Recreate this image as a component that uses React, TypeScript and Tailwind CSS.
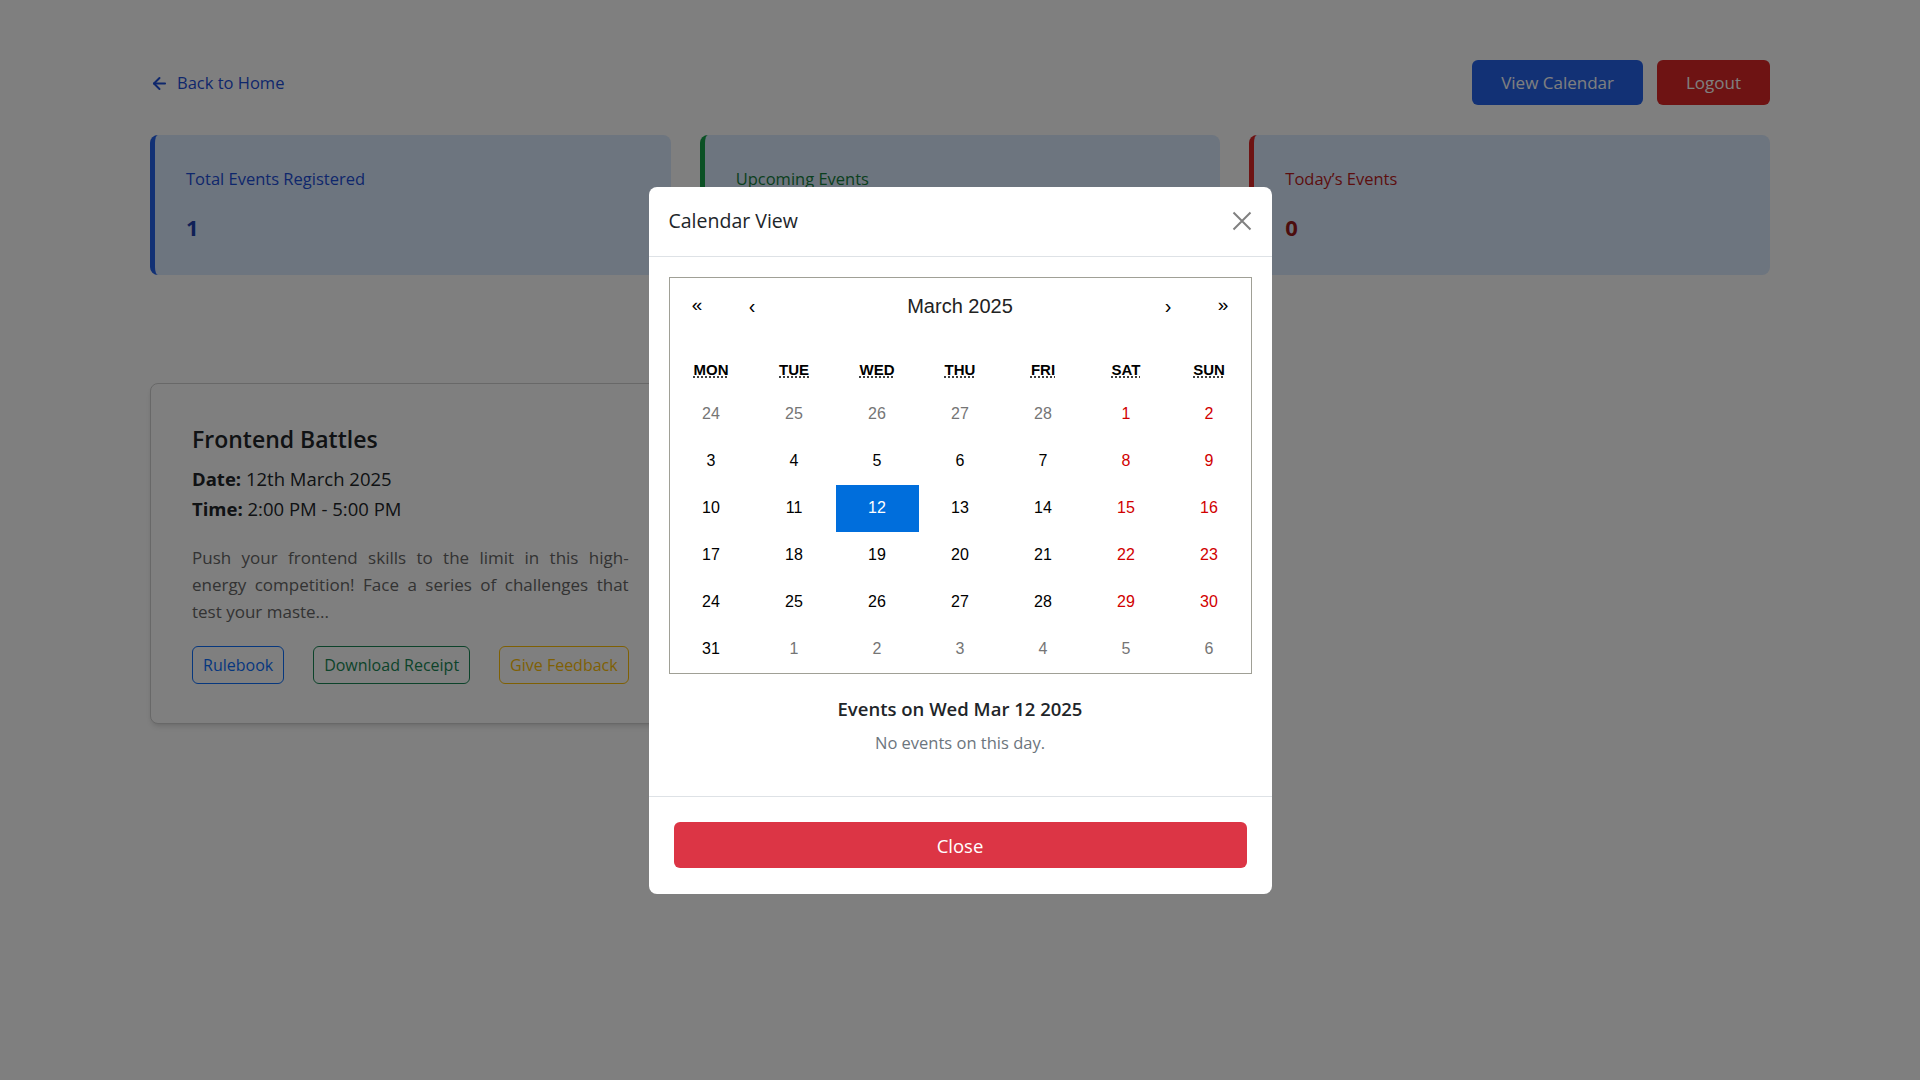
import React from "react";
import { ArrowLeft } from "lucide-react";

type Tile = { d: number; n: boolean };

const weeks: Tile[][] = [
  [24, 25, 26, 27, 28].map((d) => ({ d, n: true })).concat([1, 2].map((d) => ({ d, n: false }))),
  [3, 4, 5, 6, 7, 8, 9].map((d) => ({ d, n: false })),
  [10, 11, 12, 13, 14, 15, 16].map((d) => ({ d, n: false })),
  [17, 18, 19, 20, 21, 22, 23].map((d) => ({ d, n: false })),
  [24, 25, 26, 27, 28, 29, 30].map((d) => ({ d, n: false })),
  [{ d: 31, n: false }].concat([1, 2, 3, 4, 5, 6].map((d) => ({ d, n: true }))),
];

const weekdays = [
  ["MON", "Monday"],
  ["TUE", "Tuesday"],
  ["WED", "Wednesday"],
  ["THU", "Thursday"],
  ["FRI", "Friday"],
  ["SAT", "Saturday"],
  ["SUN", "Sunday"],
];

function StatCard({
  title,
  value,
  border,
  titleColor,
  valueColor,
}: {
  title: string;
  value: string;
  border: string;
  titleColor: string;
  valueColor: string;
}) {
  return (
    <div className={`h-[140px] rounded-lg border-l-[5px] bg-[#dbeafe] pl-[31px] pt-[32px] ${border}`}>
      <p className={`text-[16.5px] leading-[24px] ${titleColor}`}>{title}</p>
      <p className={`mt-[20px] text-[22px] font-bold leading-[33px] ${valueColor}`}>{value}</p>
    </div>
  );
}

function Calendar() {
  return (
    <div className="w-full border border-[#a0a096] bg-white font-['Liberation_Sans',Arial,sans-serif]">
      <div className="mb-[16px] flex h-[56px] items-center">
        <button className="h-full w-[55px] text-[19px] text-black">«</button>
        <button className="h-full w-[55px] text-[20px] text-black">‹</button>
        <div className="flex-1 text-center text-[20px] text-[#222]">March 2025</div>
        <button className="h-full w-[55px] text-[20px] text-black">›</button>
        <button className="h-full w-[55px] text-[19px] text-black">»</button>
      </div>
      <div className="grid grid-cols-7">
        {weekdays.map(([a, t]) => (
          <div key={a} className="flex h-[41px] items-center justify-center text-[15px] font-bold text-black">
            <abbr title={t} className="underline decoration-dotted underline-offset-[2px]">
              {a}
            </abbr>
          </div>
        ))}
      </div>
      <div className="grid grid-cols-7">
        {weeks.map((w, wi) =>
          w.map((t, ci) => {
            const active = !t.n && t.d === 12;
            const color = active
              ? "bg-[#006edc] text-white"
              : t.n
              ? "text-[#757575]"
              : ci >= 5
              ? "text-[#d10000]"
              : "text-black";
            return (
              <div key={`${wi}-${ci}`} className={`flex h-[47px] items-center justify-center text-[16px] ${color}`}>
                {t.d}
              </div>
            );
          })
        )}
      </div>
    </div>
  );
}

export default function App() {
  return (
    <div className="relative min-h-screen bg-white font-['Open_Sans',sans-serif] text-[#212529]">
      <div className="mx-auto w-[1620px] pt-[60px]">
        <div className="flex h-[45px] items-center justify-between">
          <a className="flex items-center gap-[8px] pt-[2px] text-[16.5px] text-[#1d4ed8]">
            <ArrowLeft size={19} strokeWidth={2.5} />
            Back to Home
          </a>
          <div className="flex gap-[14px]">
            <button className="h-[45px] rounded-md bg-[#2563eb] px-[29px] text-[17px] text-white">View Calendar</button>
            <button className="h-[45px] rounded-md bg-[#dc2626] px-[29px] text-[17px] text-white">Logout</button>
          </div>
        </div>

        <div className="mt-[30px] grid grid-cols-3 gap-[29px]">
          <StatCard
            title="Total Events Registered"
            value="1"
            border="border-[#2563eb]"
            titleColor="text-[#1d4ed8]"
            valueColor="text-[#1e40af]"
          />
          <StatCard
            title="Upcoming Events"
            value="1"
            border="border-[#16a34a]"
            titleColor="text-[#15803d]"
            valueColor="text-[#166534]"
          />
          <StatCard
            title="Today’s Events"
            value="0"
            border="border-[#dc2626]"
            titleColor="text-[#b91c1c]"
            valueColor="text-[#991b1b]"
          />
        </div>

        <div className="mt-[108px] grid grid-cols-3 gap-[29px]">
          <div className="rounded-lg border border-[#d0d0d0] bg-white px-[41px] pb-[39px] pt-[41px] shadow-md">
            <h3 className="text-[23px] font-semibold leading-[29px] text-[#212529]">Frontend Battles</h3>
            <p className="mt-[10px] text-[18.5px] leading-[30px]">
              <strong className="font-bold">Date:</strong> 12th March 2025
            </p>
            <p className="text-[18.5px] leading-[30px]">
              <strong className="font-bold">Time:</strong> 2:00 PM - 5:00 PM
            </p>
            <div className="mt-[20px] text-[17px] leading-[27px] text-[#666]">
              <div className="text-justify [text-align-last:justify]">Push your frontend skills to the limit in this high-</div>
              <div className="text-justify [text-align-last:justify]">energy competition! Face a series of challenges that</div>
              <div>test your maste...</div>
            </div>
            <div className="mt-[21px] flex justify-between">
              <button className="rounded-md border border-[#0d6efd] px-[10px] py-[6px] text-[16px] leading-[24px] text-[#0d6efd]">
                Rulebook
              </button>
              <button className="rounded-md border border-[#198754] px-[10px] py-[6px] text-[16px] leading-[24px] text-[#198754]">
                Download Receipt
              </button>
              <button className="rounded-md border border-[#ffc107] px-[10px] py-[6px] text-[16px] leading-[24px] text-[#ffc107]">
                Give Feedback
              </button>
            </div>
          </div>
        </div>
      </div>

      <div className="fixed inset-0 flex items-center justify-center bg-black/50">
        <div className="w-[623px] rounded-lg bg-white">
          <div className="flex h-[70px] items-center justify-between border-b border-[#dee2e6] px-[20px]">
            <h5 className="text-[19.5px] font-medium text-[#212529]">Calendar View</h5>
            <button className="flex h-[20px] w-[20px] items-center justify-center">
              <svg width="20" height="20" viewBox="0 0 20 20">
                <path d="M1.5 1.5 L18.5 18.5 M18.5 1.5 L1.5 18.5" stroke="#808080" strokeWidth="2" />
              </svg>
            </button>
          </div>
          <div className="px-[20px] pb-[41px] pt-[20px]">
            <Calendar />
            <h6 className="mt-[21px] text-center text-[18.5px] font-semibold leading-[27px] text-[#212529]">
              Events on Wed Mar 12 2025
            </h6>
            <p className="mt-[9px] text-center text-[16.5px] leading-[24px] text-[#6c757d]">No events on this day.</p>
          </div>
          <div className="border-t border-[#dee2e6] px-[25px] pb-[26px] pt-[25px]">
            <button className="h-[46px] w-full rounded-md bg-[#dc3545] pt-[2px] text-[18.5px] text-white">Close</button>
          </div>
        </div>
      </div>
    </div>
  );
}
